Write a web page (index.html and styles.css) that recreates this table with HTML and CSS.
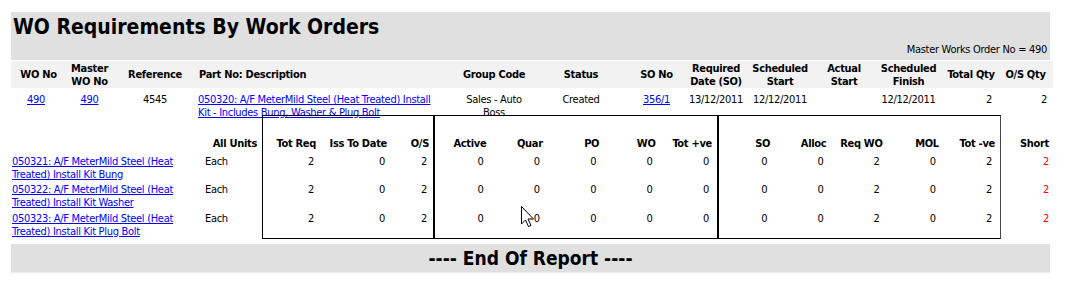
FILE: index.html
```html
<!DOCTYPE html>
<html lang="en">
<head>
<meta charset="utf-8">
<title>WO Requirements By Work Orders</title>
<link rel="stylesheet" href="styles.css">
</head>
<body>
<div class="report">
  <header class="report-head">
    <h1 class="report-title">WO Requirements By Work Orders</h1>
    <div class="report-meta">Master Works Order No = 490</div>
  </header>

  <div class="wo-grid wo-head">
    <div class="c">WO No</div>
    <div class="c">Master<br>WO No</div>
    <div class="c">Reference</div>
    <div class="l">Part No: Description</div>
    <div class="c">Group Code</div>
    <div class="c">Status</div>
    <div class="c">SO No</div>
    <div class="c">Required<br>Date (SO)</div>
    <div class="c">Scheduled<br>Start</div>
    <div class="c">Actual<br>Start</div>
    <div class="c">Scheduled<br>Finish</div>
    <div class="c">Total Qty</div>
    <div class="c">O/S Qty</div>
  </div>

  <div class="wo-grid wo-row">
    <div class="c id-wo"><a href="#">490</a></div>
    <div class="c"><a href="#">490</a></div>
    <div class="c">4545</div>
    <div class="desc"><a href="#">050320: A/F MeterMild Steel (Heat Treated) Install Kit - Includes Bung, Washer &amp; Plug Bolt</a></div>
    <div class="c group">Sales - Auto Boss</div>
    <div class="c">Created</div>
    <div class="c"><a href="#">356/1</a></div>
    <div class="c">13/12/2011</div>
    <div class="c">12/12/2011</div>
    <div class="c"></div>
    <div class="c">12/12/2011</div>
    <div class="r qty">2</div>
    <div class="r qty">2</div>
  </div>

  <div class="req">
    <div class="grp grp-items">
      <div class="hd"></div>
      <div class="hd units-hd">All Units</div>
      <div class="cell item"><a href="#">050321: A/F MeterMild Steel (Heat Treated) Install Kit Bung</a></div>
      <div class="cell units">Each</div>
      <div class="cell item"><a href="#">050322: A/F MeterMild Steel (Heat Treated) Install Kit Washer</a></div>
      <div class="cell units">Each</div>
      <div class="cell item"><a href="#">050323: A/F MeterMild Steel (Heat Treated) Install Kit Plug Bolt</a></div>
      <div class="cell units">Each</div>
    </div>

    <div class="grp box box-req">
      <div class="hd">Tot Req</div><div class="hd">Iss To Date</div><div class="hd">O/S</div>
      <div class="cell num">2</div><div class="cell num">0</div><div class="cell num">2</div>
      <div class="cell num">2</div><div class="cell num">0</div><div class="cell num">2</div>
      <div class="cell num">2</div><div class="cell num">0</div><div class="cell num">2</div>
    </div>

    <div class="grp box box-five">
      <div class="hd">Active</div><div class="hd">Quar</div><div class="hd">PO</div><div class="hd">WO</div><div class="hd">Tot +ve</div>
      <div class="cell num">0</div><div class="cell num">0</div><div class="cell num">0</div><div class="cell num">0</div><div class="cell num">0</div>
      <div class="cell num">0</div><div class="cell num">0</div><div class="cell num">0</div><div class="cell num">0</div><div class="cell num">0</div>
      <div class="cell num">0</div><div class="cell num">0</div><div class="cell num">0</div><div class="cell num">0</div><div class="cell num">0</div>
    </div>

    <div class="grp box box-five box-last">
      <div class="hd">SO</div><div class="hd">Alloc</div><div class="hd">Req WO</div><div class="hd">MOL</div><div class="hd">Tot -ve</div>
      <div class="cell num">0</div><div class="cell num">0</div><div class="cell num">2</div><div class="cell num">0</div><div class="cell num">2</div>
      <div class="cell num">0</div><div class="cell num">0</div><div class="cell num">2</div><div class="cell num">0</div><div class="cell num">2</div>
      <div class="cell num">0</div><div class="cell num">0</div><div class="cell num">2</div><div class="cell num">0</div><div class="cell num">2</div>
    </div>

    <div class="grp grp-short">
      <div class="hd">Short</div>
      <div class="cell num short">2</div>
      <div class="cell num short">2</div>
      <div class="cell num short">2</div>
    </div>
  </div>

  <footer class="report-end">---- End Of Report ----</footer>
</div>

<svg class="pointer" width="14" height="22" viewBox="0 0 14 22" aria-hidden="true">
  <path d="M0.5 0.5 V18 L4.5 14 L7.5 20.5 L10 19.5 L7 13 H12.5 Z" fill="#fff" stroke="#000" stroke-width="1" stroke-linejoin="miter"/>
</svg>
</body>
</html>
```

FILE: styles.css
```css
html,
body {
  margin: 0;
  background: #fff;
}

body {
  position: relative;
  font-family: "DejaVu Sans Condensed", "DejaVu Sans", sans-serif;
  font-size: 11px;
  line-height: 13px;
  letter-spacing: -0.3px;
  color: #000;
}

a {
  color: #0000ff;
  text-decoration: underline;
}

.report {
  width: 1042px;
  margin: 12px 0 0 11px;
}

/* Title band */
.report-head {
  box-sizing: border-box;
  width: 1039px;
  height: 48px;
  padding: 3px 3px 4px 2px;
  background: #e0e0e0;
  display: flex;
  flex-direction: column;
}

.report-title {
  margin: 0;
  font-size: 21px;
  line-height: 24px;
  font-weight: bold;
  letter-spacing: normal;
}

.report-meta {
  margin-top: auto;
  text-align: right;
}

/* Work order header + row */
.wo-grid {
  display: grid;
  grid-template-columns: 55px 47px 84px 255px 84px 90px 61px 58px 70px 58px 71px 54px 55px;
}

.wo-head {
  margin-top: 1px;
  height: 27px;
  background: #f2f2f2;
  font-weight: bold;
  align-items: center;
}

.wo-row {
  box-sizing: border-box;
  height: 27px;
  padding-top: 5px;
  align-items: start;
}

.c { text-align: center; }
.l { text-align: left; padding-left: 2px; }
.r { text-align: right; }

.id-wo { padding-right: 5px; }
.desc { padding: 0 12px 0 1px; }
.group { padding: 0 6px; }
.qty { padding-right: 6px; }

/* Requirement lines with boxed stock columns */
.req {
  display: flex;
  align-items: stretch;
}

.grp {
  display: grid;
  grid-template-rows: 37px 28px 29px 28px;
  border: 1px solid transparent;
  border-left: 0;
  border-right: 0;
}

.box {
  border: 1px solid #000;
}

.box-last {
  border-right-color: #444;
}

.grp-items {
  grid-template-columns: 193px 58px;
}

.box-req {
  grid-template-columns: 57px 71px 42px;
}

.box-five {
  width: 282px;
  grid-template-columns: repeat(5, 1fr);
}

.box-last {
  width: 281px;
}

.grp-short {
  grid-template-columns: 52px;
}

.hd {
  align-self: end;
  padding: 0 5px 3px 0;
  font-weight: bold;
  text-align: right;
  white-space: nowrap;
  overflow: hidden;
}

.box-req .hd { padding-right: 4px; }
.grp-short .hd { padding-right: 4px; }

.cell {
  padding-top: 2px;
}

.item {
  padding: 2px 12px 0 1px;
}

.units {
  padding-left: 1px;
}

.num {
  text-align: right;
  padding-right: 8px;
}

.box-req .num { padding-right: 6px; }

.short {
  color: #ff0000;
  padding-right: 4px;
}

/* Closing band */
.report-end {
  width: 1039px;
  height: 29px;
  margin-top: 5px;
  background: #e0e0e0;
  border-bottom: 1px solid #ececec;
  box-sizing: border-box;
  text-align: center;
  font-size: 19px;
  line-height: 28px;
  font-weight: bold;
  letter-spacing: normal;
}

/* Mouse pointer resting over the grid */
.pointer {
  position: absolute;
  left: 521px;
  top: 206px;
}
```
